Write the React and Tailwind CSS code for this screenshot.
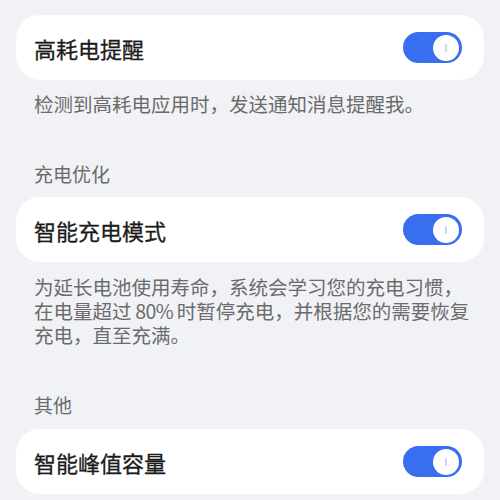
import React from "react";

function Toggle() {
  return (
    <div className="w-[59px] h-[31px] rounded-full bg-[#3a6ef0] flex items-center justify-end pr-[3px]">
      <div className="w-[26px] h-[26px] rounded-full bg-white flex items-center justify-center">
        <div className="w-[2px] h-[8px] rounded-full bg-[#c9d6f5]" />
      </div>
    </div>
  );
}

function Card({ title, className = "" }) {
  return (
    <div className={`h-[65px] rounded-[24px] bg-white flex items-center justify-between pl-[18px] pr-[22px] ${className}`}>
      <span className="text-[22px] font-normal text-[#1b1b1b] leading-none [-webkit-text-stroke:0.3px_#1b1b1b]">{title}</span>
      <Toggle />
    </div>
  );
}

export default function App() {
  return (
    <div
      className="w-[500px] h-[500px] overflow-hidden bg-[#f1f2f6] px-4 pt-[15px]"
      style={{ fontFamily: '"Noto Sans CJK SC", "Noto Sans", sans-serif' }}
    >
      <Card title="高耗电提醒" />
      <p className="mt-[12px] px-[18px] text-[19.5px] leading-[24px] text-[#6b6b6b] whitespace-nowrap">
        检测到高耗电应用时，发送通知消息提醒我。
      </p>
      <p className="mt-[46px] px-[18px] text-[19px] leading-[24px] text-[#6b6b6b]">充电优化</p>
      <Card title="智能充电模式" className="mt-[11px]" />
      <div className="mt-[13px] px-[18px] text-[19.5px] leading-[24px] text-[#6b6b6b] whitespace-nowrap">
        <div>为延长电池使用寿命，系统会学习您的充电习惯，</div>
        <div>
          在电量超过<span className="tracking-[-0.6px]"> 80% </span>时暂停充电，并根据您的需要恢复
        </div>
        <div>充电，直至充满。</div>
      </div>
      <p className="mt-[46px] px-[18px] text-[19px] leading-[24px] text-[#6b6b6b]">其他</p>
      <Card title="智能峰值容量" className="mt-[12px]" />
    </div>
  );
}
